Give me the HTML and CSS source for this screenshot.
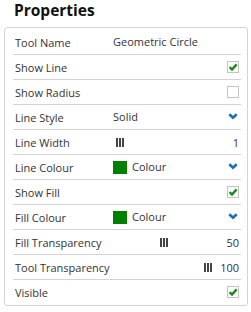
FILE: index.html
```html
<!DOCTYPE html>
<html lang="en">
<head>
  <meta charset="UTF-8" />
  <title>Properties</title>
  <link rel="stylesheet" href="styles.css">
</head>
<body>
  <h1>Properties</h1>

  <div class="panel">
    <div class="row">
      <span class="label">Tool Name</span>
      <span class="value">Geometric Circle</span>
    </div>
    <div class="row">
      <span class="label">Show Line</span>
      <span class="value"></span>
      <span class="check"><svg viewBox="0 0 10 10"><path d="M1.6 5.2 L4 7.6 L8.6 2.4" /></svg></span>
    </div>
    <div class="row">
      <span class="label">Show Radius</span>
      <span class="value"></span>
      <span class="check"></span>
    </div>
    <div class="row">
      <span class="label">Line Style</span>
      <span class="value">Solid</span>
      <svg class="chevron" viewBox="0 0 10 7"><path d="M1.3 1.3 L5 4.8 L8.7 1.3" /></svg>
    </div>
    <div class="row">
      <span class="label">Line Width</span>
      <span class="slider"><span class="thumb" style="--v:0"><i></i><i></i><i></i></span></span>
      <span class="num">1</span>
    </div>
    <div class="row">
      <span class="label">Line Colour</span>
      <span class="value"><span class="swatch"></span>Colour</span>
      <svg class="chevron" viewBox="0 0 10 7"><path d="M1.3 1.3 L5 4.8 L8.7 1.3" /></svg>
    </div>
    <div class="row">
      <span class="label">Show Fill</span>
      <span class="value"></span>
      <span class="check"><svg viewBox="0 0 10 10"><path d="M1.6 5.2 L4 7.6 L8.6 2.4" /></svg></span>
    </div>
    <div class="row">
      <span class="label">Fill Colour</span>
      <span class="value"><span class="swatch"></span>Colour</span>
      <svg class="chevron" viewBox="0 0 10 7"><path d="M1.3 1.3 L5 4.8 L8.7 1.3" /></svg>
    </div>
    <div class="row">
      <span class="label">Fill Transparency</span>
      <span class="slider"><span class="thumb" style="--v:0.5"><i></i><i></i><i></i></span></span>
      <span class="num">50</span>
    </div>
    <div class="row">
      <span class="label">Tool Transparency</span>
      <span class="slider"><span class="thumb" style="--v:1"><i></i><i></i><i></i></span></span>
      <span class="num">100</span>
    </div>
    <div class="row">
      <span class="label">Visible</span>
      <span class="value"></span>
      <span class="check"><svg viewBox="0 0 10 10"><path d="M1.6 5.2 L4 7.6 L8.6 2.4" /></svg></span>
    </div>
  </div>
</body>
</html>
```

FILE: styles.css
```css
body {
  margin: 0;
  font-family: 'Open Sans', sans-serif;
  font-size: 11px;
  color: #333;
  background: #fff;
}

h1 {
  margin: 0 0 7px 0;
  padding-left: 14px;
  font-size: 15.5px;
  line-height: 20px;
  font-weight: 700;
  color: #111;
}

.panel {
  margin-left: 4px;
  width: 244px;
  box-sizing: border-box;
  border: 1px solid #d4d4d4;
  border-radius: 3px;
  padding: 2px 6px 1px 8px;
}

.row {
  display: flex;
  align-items: center;
  height: 24px;
  border-bottom: 1px solid #d4d4d4;
  padding: 0 2px;
}

.row:last-child {
  border-bottom: none;
}

.label {
  width: 98px;
  flex: none;
  white-space: nowrap;
}

.value {
  flex: 1;
  display: flex;
  align-items: center;
  padding-bottom: 1px;
}

.swatch {
  width: 14px;
  height: 13px;
  background: #008000;
  margin-right: 5px;
  margin-top: 2px;
}

.check {
  width: 10px;
  height: 10px;
  border: 1px solid #c4c4c4;
  background: #fff;
  display: flex;
}

.check svg {
  width: 10px;
  height: 10px;
  fill: none;
  stroke: #1b8a1b;
  stroke-width: 2.4;
}

.chevron {
  width: 10px;
  height: 7px;
  margin: 0 1px 1px 0;
  fill: none;
  stroke: #1c6fb5;
  stroke-width: 2.6;
}

.slider {
  flex: 1;
  position: relative;
  height: 24px;
}

.thumb {
  position: absolute;
  top: 8px;
  left: calc(var(--v) * (100% - 14px));
  width: 14px;
  height: 9px;
  display: flex;
  justify-content: center;
  gap: 1px;
}

.thumb i {
  width: 2px;
  background: #444;
}

.num {
  width: 24px;
  text-align: right;
}
```
